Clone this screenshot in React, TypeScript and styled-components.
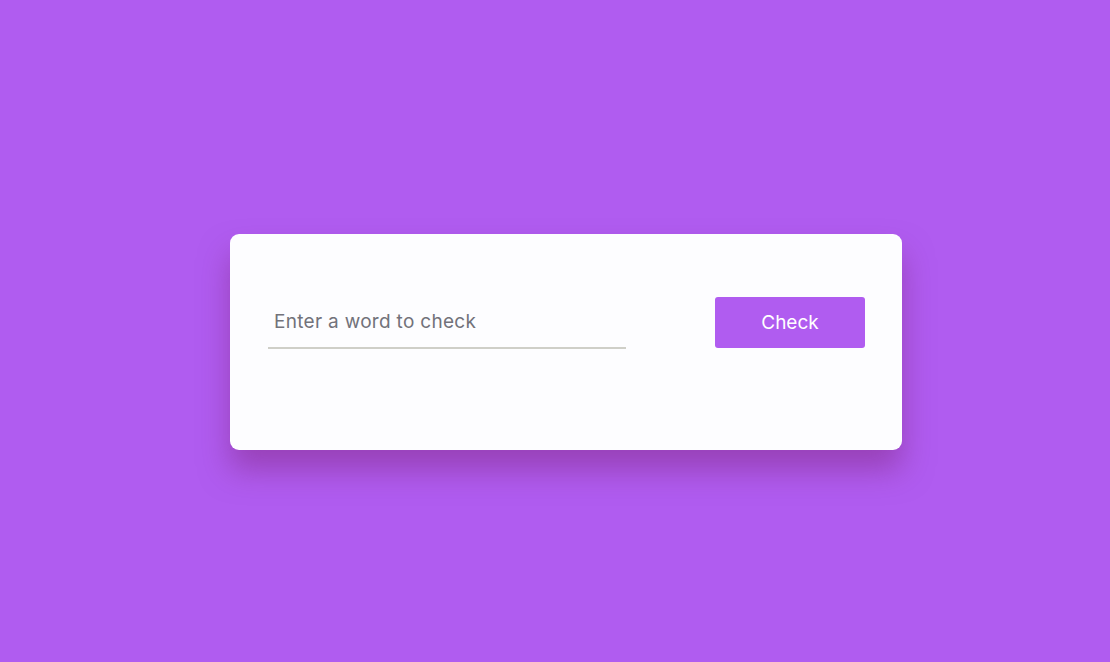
import React from "react";
import styled, { createGlobalStyle } from "styled-components";

const Global = createGlobalStyle`
  html, body { margin: 0; padding: 0; }
  body {
    background: #b05cf0;
    font-family: Inter, "Open Sans", sans-serif;
    min-height: 662px;
  }
`;

const Page = styled.main`
  height: 662px;
  display: flex;
  align-items: flex-start;
  justify-content: flex-start;
  padding: 234px 0 0 230px;
  box-sizing: border-box;
`;

const Card = styled.section`
  width: 672px;
  height: 216px;
  box-sizing: border-box;
  background: #fdfdff;
  border-radius: 9px;
  box-shadow: 0 20px 30px rgba(130, 40, 130, 0.5);
  padding: 63px 37px 0 38px;
`;

const Row = styled.form`
  display: flex;
  align-items: flex-start;
  justify-content: space-between;
`;

const Input = styled.input`
  width: 358px;
  height: 52px;
  box-sizing: border-box;
  border: none;
  border-bottom: 2px solid #cfcfc8;
  background: transparent;
  outline: none;
  padding: 0 6px 1px;
  font-family: Inter, "Open Sans", sans-serif;
  font-size: 19px;
  letter-spacing: 0.3px;
  color: #333;
  &::placeholder {
    color: #72727a;
  }
`;

const Button = styled.button`
  width: 150px;
  height: 51px;
  border: none;
  border-radius: 3px;
  background: #b05cf0;
  color: #ffffff;
  font-family: Inter, "Open Sans", sans-serif;
  font-size: 19px;
  cursor: pointer;
`;

export default function App() {
  return (
    <>
      <Global />
      <Page>
        <Card>
          <Row onSubmit={(e) => e.preventDefault()}>
            <Input placeholder="Enter a word to check" />
            <Button type="submit">Check</Button>
          </Row>
        </Card>
      </Page>
    </>
  );
}
